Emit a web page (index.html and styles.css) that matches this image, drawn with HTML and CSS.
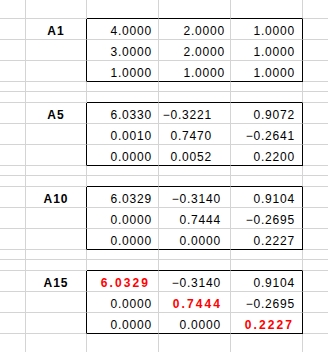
FILE: index.html
```html
<!DOCTYPE html>
<html>
<head>
<meta charset="utf-8">
<link rel="stylesheet" href="styles.css">
</head>
<body>
<table class="sheet">
  <colgroup>
    <col class="c-a"><col class="c-b"><col class="c-n"><col class="c-n"><col class="c-n"><col class="c-f">
  </colgroup>
  <tr class="r-top">
    <td></td><td></td><td class="above"></td><td class="above"></td><td class="above"></td><td></td>
  </tr>
  <tr class="r-data">
    <td></td><td class="lbl bl">A1</td><td class="num">4.0000</td><td class="num n1">2.0000</td><td class="num ne br">1.0000</td><td></td>
  </tr>
  <tr class="r-data">
    <td></td><td class="bl"></td><td class="num">3.0000</td><td class="num n1">2.0000</td><td class="num ne br">1.0000</td><td></td>
  </tr>
  <tr class="r-data">
    <td></td><td class="bl"></td><td class="num bb">1.0000</td><td class="num n1 bb">1.0000</td><td class="num ne bb br">1.0000</td><td></td>
  </tr>
  <tr class="r-gap1"><td></td><td></td><td></td><td></td><td></td><td></td></tr>
  <tr class="r-gap2"><td></td><td></td><td class="above"></td><td class="above"></td><td class="above"></td><td></td></tr>
  <tr class="r-data">
    <td></td><td class="lbl bl">A5</td><td class="num">6.0330</td><td class="num n2">&minus;0.3221</td><td class="num ne br">0.9072</td><td></td>
  </tr>
  <tr class="r-data">
    <td></td><td class="bl"></td><td class="num">0.0010</td><td class="num n2">0.7470</td><td class="num ne br">&minus;0.2641</td><td></td>
  </tr>
  <tr class="r-data">
    <td></td><td class="bl"></td><td class="num bb">0.0000</td><td class="num n2 bb">0.0052</td><td class="num ne bb br">0.2200</td><td></td>
  </tr>
  <tr class="r-gap1"><td></td><td></td><td></td><td></td><td></td><td></td></tr>
  <tr class="r-gap2"><td></td><td></td><td class="above"></td><td class="above"></td><td class="above"></td><td></td></tr>
  <tr class="r-data">
    <td></td><td class="lbl bl">A10</td><td class="num">6.0329</td><td class="num n3">&minus;0.3140</td><td class="num ne br">0.9104</td><td></td>
  </tr>
  <tr class="r-data">
    <td></td><td class="bl"></td><td class="num">0.0000</td><td class="num n3">0.7444</td><td class="num ne br">&minus;0.2695</td><td></td>
  </tr>
  <tr class="r-data">
    <td></td><td class="bl"></td><td class="num bb">0.0000</td><td class="num n3 bb">0.0000</td><td class="num ne bb br">0.2227</td><td></td>
  </tr>
  <tr class="r-gap1"><td></td><td></td><td></td><td></td><td></td><td></td></tr>
  <tr class="r-gap2"><td></td><td></td><td class="above"></td><td class="above"></td><td class="above"></td><td></td></tr>
  <tr class="r-data">
    <td></td><td class="lbl bl">A15</td><td class="num red">6.0329</td><td class="num n3">&minus;0.3140</td><td class="num ne br">0.9104</td><td></td>
  </tr>
  <tr class="r-data">
    <td></td><td class="bl"></td><td class="num">0.0000</td><td class="num n3 red">0.7444</td><td class="num ne br">&minus;0.2695</td><td></td>
  </tr>
  <tr class="r-data">
    <td></td><td class="bl"></td><td class="num bb">0.0000</td><td class="num n3 bb">0.0000</td><td class="num ne bb br red">0.2227</td><td></td>
  </tr>
  <tr class="r-end"><td></td><td></td><td></td><td></td><td></td><td></td></tr>
</table>
</body>
</html>
```

FILE: styles.css
```css
html, body {
  margin: 0;
  padding: 0;
  background: #ffffff;
}
body {
  width: 328px;
  height: 352px;
  overflow: hidden;
}
.sheet {
  border-collapse: separate;
  border-spacing: 0;
  table-layout: fixed;
  width: 328px;
  font-family: "Liberation Sans", Arial, sans-serif;
  font-size: 12px;
  color: #000;
}
.c-a { width: 26px; }
.c-b { width: 61px; }
.c-n { width: 72px; }
.c-f { width: 25px; }
.sheet td {
  padding: 0;
  border: 0;
  border-right: 1px solid #d4d4d4;
  border-bottom: 1px solid #d4d4d4;
  box-sizing: border-box;
  white-space: nowrap;
  overflow: hidden;
  line-height: 13px;
}
.sheet td:last-child { border-right: 0; }
.r-top td { height: 19px; }
.r-data td { height: 21px; padding-top: 5px; }
.r-gap1 td { height: 10px; }
.r-gap2 td { height: 11px; }
.r-end td { height: 19px; border-bottom: 0; }
.sheet td.above { border-bottom-color: #000; }
.sheet td.bl { border-right-color: #000; }
.sheet td.br { border-right-color: #000; }
.sheet td.bb { border-bottom-color: #000; }
.lbl {
  text-align: center;
  font-weight: bold;
  letter-spacing: 1px;
  padding-left: 1px;
}
.num {
  text-align: right;
  letter-spacing: 0.8px;
  padding-right: 6px !important;
}
.num.n1 { padding-right: 5px !important; }
.num.n2 { padding-right: 18px !important; }
.num.n3 { padding-right: 9px !important; }
.num.ne { padding-right: 7px !important; }
.sheet td.red {
  color: #ff0000;
  font-weight: bold;
  letter-spacing: 2.1px;
  padding-right: 8px !important;
}
.sheet td.n3.red { padding-right: 8px !important; }
.sheet td.ne.red { padding-right: 8px !important; }
```
